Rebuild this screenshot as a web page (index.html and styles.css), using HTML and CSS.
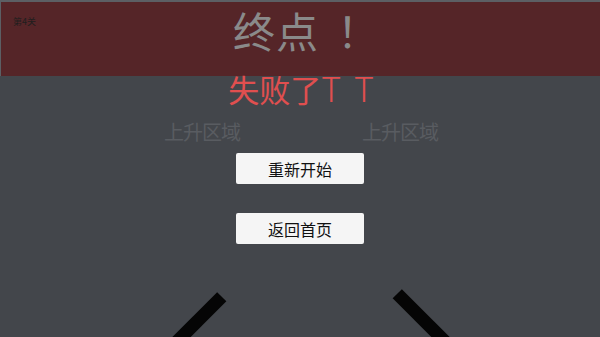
FILE: index.html
```html
<!DOCTYPE html>
<html lang="zh-CN">

<head>
    <meta charset="UTF-8">
    <meta name="viewport" content="width=device-width, initial-scale=1.0">
    <title>终点</title>
    <link rel="stylesheet" href="styles.css">
</head>

<body>
    <div class="stage">
        <div class="band">
            <span class="level">第4关</span>
            <h1 class="title">终点<span class="bang">！</span></h1>
        </div>
        <p class="result">失败了<span class="tt">TT</span></p>
        <div class="zones">
            <span class="zone">上升区域</span>
            <span class="zone">上升区域</span>
        </div>
        <div class="menu">
            <button class="btn">重新开始</button>
            <button class="btn">返回首页</button>
        </div>
        <!-- 底部的两根挡板 -->
        <span class="bar bar-left"></span>
        <span class="bar bar-right"></span>
    </div>
</body>

</html>
```

FILE: styles.css
```css
* {
    box-sizing: border-box;
}

body {
    margin: 0;
    font-family: "Noto Sans CJK SC", "Noto Sans", sans-serif;
}

.stage {
    position: relative;
    width: 600px;
    height: 337px;
    overflow: hidden;
    background: #43464b;
    display: flex;
    flex-direction: column;
    align-items: center;
}

.band {
    width: 100%;
    height: 76px;
    border-top: 2px solid #5c5f64;
    border-left: 1px solid #5c5f64;
    background: #552528;
    display: flex;
    justify-content: center;
}

.level {
    position: absolute;
    top: 15px;
    left: 13px;
    font-size: 9px;
    color: #1e1e1e;
}

.title {
    margin: 4px 0 0 12px;
    font-size: 42px;
    line-height: 48px;
    font-weight: normal;
    color: #8a8a8a;
    letter-spacing: 1px;
    white-space: nowrap;
}

.title .bang {
    margin-left: 18px;
}

.result {
    margin: -5px 0 0 2px;
    font-size: 31px;
    line-height: 36px;
    color: #e04f4f;
    white-space: nowrap;
}

.result .tt {
    font-size: 34px;
    font-weight: 300;
    line-height: 30px;
    letter-spacing: 13px;
    margin-right: -13px;
}

.zones {
    display: flex;
    gap: 122px;
    margin: 13px 0 0 2px;
}

.zone {
    font-size: 20px;
    line-height: 24px;
    color: #595c61;
    letter-spacing: -1px;
}

.menu {
    display: flex;
    flex-direction: column;
    gap: 29px;
    margin-top: 9px;
}

.btn {
    width: 128px;
    height: 31px;
    border: none;
    border-radius: 2px;
    background: #f5f5f5;
    font-family: inherit;
    font-size: 16px;
    color: #111;
    padding: 0;
}

.bar {
    position: absolute;
    width: 70px;
    height: 13px;
    background: #050505;
}

.bar-left {
    left: 162px;
    top: 315px;
    transform: rotate(-45deg);
}

.bar-right {
    left: 387px;
    top: 312px;
    transform: rotate(45deg);
}
```
